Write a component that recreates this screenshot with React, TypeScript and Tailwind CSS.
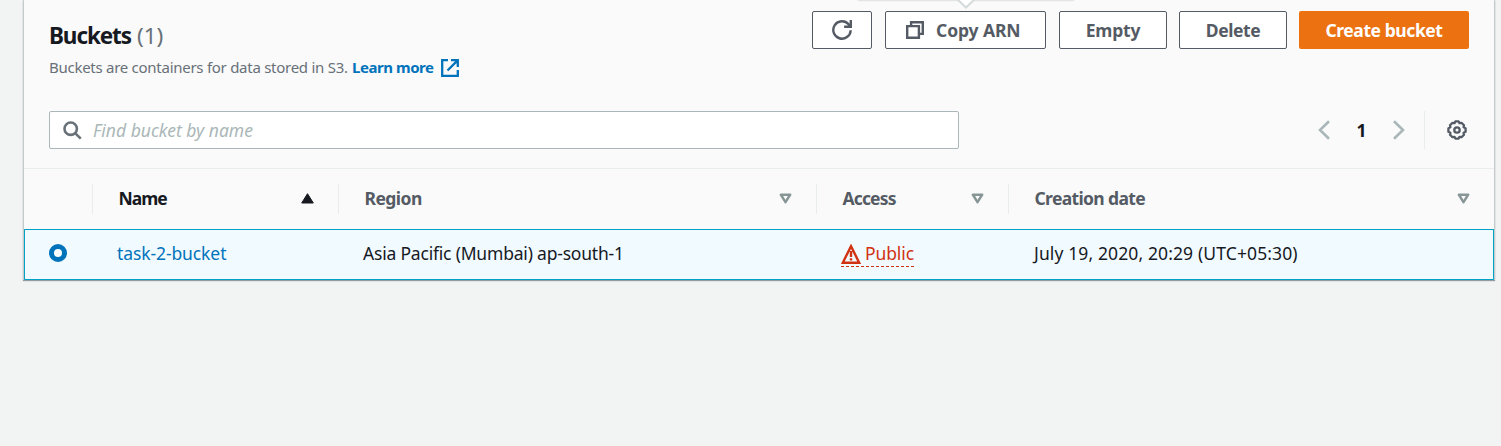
import React from "react";

function Button({ className, children }: { className: string; children: React.ReactNode }) {
  return (
    <button className={`flex h-[38px] shrink-0 items-center justify-center rounded-[2px] border border-[#545b64] bg-white pb-px font-bold whitespace-nowrap text-[#545b64] ${className}`}>
      {children}
    </button>
  );
}

function SortIcon() {
  return (
    <svg className="h-[11px] w-[13px] shrink-0" viewBox="0 0 13 11" fill="none" stroke="#879596" strokeWidth="2.5" strokeLinejoin="round">
      <path d="M1.8 1.7h9.4L6.5 9.2z" />
    </svg>
  );
}

function HeaderCell({ label, className, active = false }: { label: string; className: string; active?: boolean }) {
  return (
    <div className={`flex h-[30px] shrink-0 items-center justify-between border-l border-[#eaeded] pb-[2px] pl-[25.5px] ${className}`}>
      <span className={`mb-px font-bold whitespace-nowrap ${active ? "text-[#16191f]" : "text-[#545b64]"}`}>{label}</span>
      {active ? (
        <svg className="h-[11px] w-[13px]" viewBox="0 0 13 11" fill="#16191f" stroke="#16191f" strokeLinejoin="round">
          <path d="M6.5 .7L12.3 10H.7z" />
        </svg>
      ) : (
        <SortIcon />
      )}
    </div>
  );
}

export default function App() {
  return (
    <div className="relative h-[446px] w-[1501px] overflow-hidden bg-[#f2f3f3] pl-[23px] font-['Noto_Sans',sans-serif] text-[17.5px] leading-[24px] text-[#16191f] [font-stretch:87.5%]">
      <div className="h-[280px] w-[1472px] border-x border-[#c4cbcc] bg-[#fafafa] shadow-[0_1px_1px_rgba(0,28,36,0.4)]">
        <div className="flex h-[111px] justify-between pl-[25px] pr-[25px]">
          <div>
            <h2 className="flex pt-[21px] text-[22.5px] leading-[30px] whitespace-nowrap">
              <span className="w-[82px] font-bold tracking-[-1.1px]">Buckets</span>
              <span className="ml-[6px] text-[#687078]">(1)</span>
            </h2>
            <p className="mt-[4px] flex items-center text-[15px] leading-[24px] whitespace-nowrap text-[#687078]">
              <span className="w-[303px] tracking-[-0.27px]">Buckets are containers for data stored in S3.</span>
              <a className="flex items-center font-bold text-[#0073bb]">
                <span className="w-[82px] tracking-[-0.45px]">Learn more</span>
                <svg className="mt-[2px] ml-[7px] h-[18px] w-[18px]" viewBox="0 0 18 18" fill="none" stroke="#0073bb" strokeWidth="2.3">
                  <path d="M7 1.2H1.2v15.6h15.6V11M10 1.2h6.8V8M16.4 1.6L6.5 11.5" />
                </svg>
              </a>
            </p>
          </div>
          <div className="flex pt-[11px]">
            <Button className="mr-[13px] w-[60px]">
              <svg className="mt-px h-5 w-5" viewBox="0 0 20 20" fill="none" stroke="#545b64" strokeWidth="2.4">
                <path d="M18.7 10.3A8.7 8.7 0 1 1 16.6 4.3L18.6 6.2M18.8 0v6.7h-6.7" />
              </svg>
            </Button>
            <Button className="mr-[13px] w-[161px] pr-[5px]">
              <svg className="mt-px mr-[12px] h-[18px] w-[18px] shrink-0" viewBox="0 0 18 18" fill="none" stroke="#545b64" strokeWidth="2.4">
                <path d="M1.2 5.1h11.7v11.7H1.2zM5.1 5V1.2h11.7v11.7H13" />
              </svg>
              <span className="w-[84px] text-left tracking-[-0.1px]">Copy ARN</span>
            </Button>
            <Button className="mr-[12px] w-[108px]"><span className="tracking-[-0.2px]">Empty</span></Button>
            <Button className="mr-[12px] w-[108px]"><span className="tracking-[-0.4px]">Delete</span></Button>
            <button className="h-[38px] w-[170px] rounded-[2px] bg-[#ec7211] pb-px font-bold tracking-[-0.42px] text-white">Create bucket</button>
          </div>
        </div>
        <div className="flex h-[58px] items-start justify-between border-b border-[#eaeded] pl-[25px] pr-[27px]">
          <div className="flex h-[38px] w-[910px] items-center rounded-[2px] border border-[#aab7b8] bg-white pl-[13px]">
            <svg className="h-[19px] w-[19px]" viewBox="0 0 19 19" fill="none" stroke="#687078" strokeWidth="2.6">
              <circle cx="7.7" cy="7.7" r="6.2" /><path d="M12.1 12.1l5.7 5.5" />
            </svg>
            <span className="mb-px ml-[11px] text-[#aab7b8] italic">Find bucket by name</span>
          </div>
          <div className="flex h-[38px] items-center">
            <svg className="h-5 w-3" viewBox="0 0 12 20" fill="none" stroke="#aab7b8" strokeWidth="2.6"><path d="M11 1.2L2 10l9 8.8" /></svg>
            <span className="mb-px w-[63px] text-center font-bold">1</span>
            <svg className="h-5 w-3" viewBox="0 0 12 20" fill="none" stroke="#aab7b8" strokeWidth="2.6"><path d="M1 1.2l9 8.8-9 8.8" /></svg>
            <div className="mr-[22px] ml-[19px] h-[38px] w-px bg-[#eaeded]" />
            <svg className="h-5 w-5" viewBox="0 0 20 20" fill="none" stroke="#545b64" strokeWidth="2.3" strokeLinejoin="round">
              <path d="M8.4 1.4h3.2l.9 1.8 2-.4 2.5 2.5-.4 2 2 .9v3.6l-2 .9.4 2-2.5 2.5-2-.4-.9 1.8H8.4l-.9-1.8-2 .4L3 14.7l.4-2-2-.9V8.2l2-.9-.4-2 2.5-2.5 2 .4z" />
              <circle cx="10" cy="10" r="2.7" />
            </svg>
          </div>
        </div>
        <div className="flex h-[60px] items-center pl-[68px]">
          <HeaderCell label="Name" active className="w-[246px] pr-[24px] tracking-[-1px]" />
          <HeaderCell label="Region" className="w-[478px] pr-[24px] tracking-[-0.55px]" />
          <HeaderCell label="Access" className="w-[192px] pr-[24px] tracking-[-0.85px]" />
          <HeaderCell label="Creation date" className="w-[486px] pr-[24px] tracking-[-0.65px]" />
        </div>
        <div className="flex h-[51px] items-center border border-[#00a1c9] bg-[#f1faff] pb-[4px] pl-[24px] whitespace-nowrap">
          <span className="mt-px mr-[50px] h-[18px] w-[18px] shrink-0 rounded-full border-[5.5px] border-[#0073bb] bg-white" />
          <a className="w-[246px] shrink-0 tracking-[-0.1px] text-[#0073bb]">task-2-bucket</a>
          <span className="w-[478px] shrink-0 tracking-[-0.2px]">Asia Pacific (Mumbai) ap-south-1</span>
          <div className="w-[192px] shrink-0 pt-[2px]">
            <span className="flex h-[27px] w-[73px] items-center border-b border-dashed border-[#d13212] pb-px text-[#d13212]">
              <svg className="mt-[2px] mr-[4px] h-5 w-5 shrink-0" viewBox="0 0 20 20" fill="none" stroke="#d13212" strokeWidth="2.4">
                <path d="M10 2.2L1.8 18.7h16.4zM10 7v6M10 14.3v2.3" />
              </svg>
              <span className="tracking-[-0.1px]">Public</span>
            </span>
          </div>
          <span className="ml-px tracking-[0.12px]">July 19, 2020, 20:29 (UTC+05:30)</span>
        </div>
      </div>
      <div className="absolute top-[-219px] left-[858px] h-[218px] w-[216px] bg-white shadow-[0_1px_2px_rgba(0,28,36,0.3)]" />
      <svg className="absolute top-0 left-[953px] h-[9px] w-[26px]" viewBox="0 0 26 9"><path d="M3 -2L13 7.5L23 -2" fill="#fff" stroke="#d5dbdb" strokeWidth="2" /></svg>
    </div>
  );
}
